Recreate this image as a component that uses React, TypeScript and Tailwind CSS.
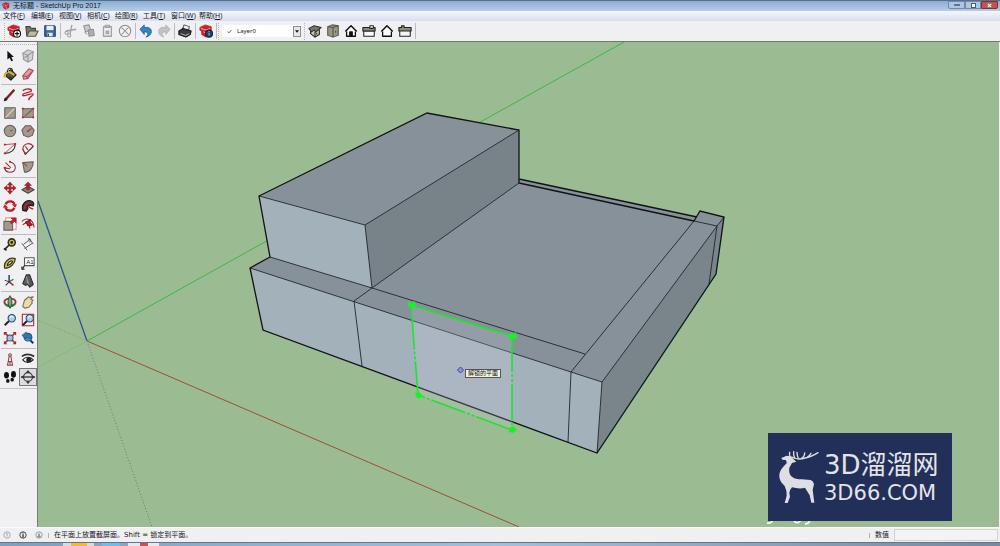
import React from 'react';

type Tool = { label: string; icon: React.ReactNode; active?: boolean };

const RED = '#b5222b';
const TAUPE = '#a39a8c';

const Icon: React.FC<{ children: React.ReactNode }> = ({ children }) => (
    <svg viewBox="0 0 16 16" className="size-[14px]" fill="none" stroke="#222" strokeWidth="1.2" strokeLinejoin="round">
        {children}
    </svg>
);

const Logo = () => (
    <>
        <path d="M1 4l6-3 7 2v8l-6 4-5-3V8L1 7z" fill="#cf202b" stroke="#9e1820" strokeWidth=".7" />
        <path d="M2 5l6 2 5-2M5 9l4 1.500V14" fill="none" stroke="#f6d5d5" strokeWidth=".9" />
    </>
);

const Magnifier = () => (
    <>
        <path d="M7 9L2 14" stroke="#222" strokeWidth="2.4" />
        <circle cx="10" cy="6" r="4.2" fill="#a9d0ea" stroke="#27506f" />
        <path d="M8 5q2-2 4 0" stroke="#fff" />
    </>
);

const House: React.FC<{ door?: boolean }> = ({ door }) => (
    <>
        <path d="M3 8v6h10V8" fill="#fff" stroke="#111" strokeWidth="1.5" />
        <path d="M1.500 8.500L8 2l6.500 6.500" fill="#fff" stroke="#111" strokeWidth="1.700" />
        {door && <path d="M6.500 14V9h3v5" fill="#111" stroke="#111" />}
    </>
);

const fileTools: Tool[] = [
    {
        label: '新建',
        icon: (
            <>
                <Logo />
                <circle cx="11.500" cy="11" r="4" fill="#fff" stroke="#111" />
                <path d="M11.500 8.500v5M9 11h5" stroke="#111" strokeWidth="1.400" />
            </>
        ),
    },
    {
        label: '打开',
        icon: (
            <>
                <path d="M1 3h5l1 2h5v8H2z" fill="#77776a" stroke="#444" />
                <path d="M2 14l3-6h10l-3 6z" fill="#bcbca4" stroke="#55554a" />
            </>
        ),
    },
    {
        label: '保存',
        icon: (
            <>
                <path d="M2 2h11l1 1v11H2z" fill="#3e6d9b" stroke="#1f3f63" />
                <path d="M4 2h8v5H4z" fill="#e8eff5" stroke="none" />
                <path d="M5 10h6v4H5z" fill="#dbe6ef" stroke="none" />
                <path d="M6 11v3" />
            </>
        ),
    },
];

const editTools: Tool[] = [
    {
        label: '剪切',
        icon: (
            <g stroke="#a2a2a5">
                <path d="M9 1L7 11M2 8l12-2" strokeWidth="1.500" />
                <circle cx="6" cy="13" r="1.800" />
                <circle cx="3" cy="10" r="1.800" />
            </g>
        ),
    },
    {
        label: '复制',
        icon: (
            <g stroke="#929295" fill="#c9c9cb">
                <path d="M2 2l6-1 2 6-6 2z" />
                <path d="M7 7l6-1 1 7-6 1z" fill="#aeaeb1" />
                <path d="M3 9l3 3" />
            </g>
        ),
    },
    {
        label: '粘贴',
        icon: (
            <g stroke="#a2a2a5">
                <path d="M4 3h9v11H4z" strokeWidth="1.500" />
                <path d="M6 1.500h5V4H6zM7 8h3v3H7z" fill="#b8b8ba" />
            </g>
        ),
    },
    {
        label: '删除',
        icon: (
            <g stroke="#8e8e91">
                <circle cx="8" cy="8" r="6.500" />
                <path d="M4 4l8 8M12 4l-8 8" />
            </g>
        ),
    },
];

const undoTools: Tool[] = [
    { label: '撤销', icon: <path d="M1 6l5-5v3c6-1 9 2 8 6-1 3-3 4-6 5 3-3 3-6-2-6v3z" fill="#2f86c4" stroke="#1b5685" strokeWidth=".8" /> },
    { label: '重做', icon: <path d="M15 6l-5-5v3C4 3 1 6 2 10c1 3 3 4 6 5-3-3-3-6 2-6v3z" fill="#c2c2c5" stroke="#aaaaad" strokeWidth=".8" /> },
];

const printTools: Tool[] = [
    {
        label: '打印',
        icon: (
            <>
                <path d="M5 6l2-5 6 2-1 4z" fill="#eee" stroke="#555" />
                <path d="M1 8l5-3 9 3-1 4-5 3-8-3z" fill="#3b3b3f" stroke="#151515" />
                <path d="M3 11l6 2 4-2" stroke="#bbb" />
            </>
        ),
    },
];

const infoTools: Tool[] = [
    {
        label: '模型信息',
        icon: (
            <>
                <Logo />
                <circle cx="11.500" cy="11" r="4" fill="#243f70" stroke="#142544" />
                <path d="M11.500 10v3M11.500 8v1" stroke="#a9b9d6" />
            </>
        ),
    },
];

const viewTools: Tool[] = [
    {
        label: '等轴',
        icon: (
            <>
                <path d="M3 7v4l5 4 5-3V6" fill="#c9c7b5" />
                <path d="M1 5l6-3 8 2-6 5-2-2-3 2z" fill="#77766a" stroke="#333" />
                <path d="M8 9v6M10 10v2" />
            </>
        ),
    },
    {
        label: '俯视图',
        icon: (
            <>
                <path d="M2 3l5-2 7 1v11l-6 2-6-2z" fill="#9a9884" stroke="#55544a" />
                <path d="M8 4v11M2 3l6 1 6-2M11 8v2" stroke="#55544a" />
            </>
        ),
    },
    { label: '前视图', icon: <House door /> },
    {
        label: '右视图',
        icon: (
            <>
                <path d="M2 8h12v6H2z" fill="#fff" />
                <path d="M1 4h14v4H1z" fill="#8c8a78" />
                <path d="M9 2h4v3H9z" fill="#fff" />
            </>
        ),
    },
    { label: '后视图', icon: <House /> },
    {
        label: '左视图',
        icon: (
            <>
                <path d="M2 7h12v7H2z" fill="#f4f4f0" />
                <path d="M1 4h3V2h3v2h8v4H1z" fill="#8c8a78" />
            </>
        ),
    },
];

const sideGroups: Tool[][] = [
    [
        { label: '选择', icon: <path d="M5 2v10l2.500-2 2 4 2-1-2-4h3z" fill="#111" stroke="none" /> },
        {
            label: '制作组件',
            icon: (
                <g stroke="#949497">
                    <path d="M2 5l6-4 6 2-1 9-5 3-5-3z" fill="#d2d2d4" />
                    <path d="M2 5l6 2 6-4M8 7v8M4 10l7-5" />
                </g>
            ),
        },
        {
            label: '材质',
            icon: (
                <>
                    <path d="M3 7l6-4 6 6-6 6-5-4z" fill="#55564a" stroke="#1d1d1a" />
                    <path d="M2 12c-1-4 2-7 6-6l5 3" stroke="#d3b62a" strokeWidth="2.400" />
                    <path d="M5 6c0-6 6-6 6 0M7 11l3 2" />
                </>
            ),
        },
        {
            label: '擦除',
            icon: (
                <>
                    <path d="M2 10l7-8 5 2-6 9-5 1z" fill="#eb98a5" stroke="#a54d5b" />
                    <path d="M2 10l5 1 7-7M7 11v3" stroke="#a54d5b" />
                </>
            ),
        },
    ],
    [
        {
            label: '直线',
            icon: (
                <>
                    <path d="M3 13L13 2" stroke="#7c1e20" strokeWidth="2.600" />
                    <path d="M1.500 14.500l1-3 2 2z" fill="#222" />
                </>
            ),
        },
        { label: '手绘线', icon: <path d="M2 3c4-3 10-2 10 0S2 5 2 8s11-3 12-1-6 3-5 7" stroke={RED} strokeWidth="1.500" /> },
        {
            label: '矩形',
            icon: (
                <>
                    <path d="M2 2h12v12H2z" fill={TAUPE} stroke="#665e53" />
                    <path d="M3 13L13 3" stroke="#ded8ce" />
                </>
            ),
        },
        {
            label: '旋转长方形',
            icon: (
                <>
                    <path d="M2 3h12v10H2z" fill={TAUPE} stroke="#8d6a62" />
                    <path d="M4 12l9-8" stroke="#77665d" />
                    <path d="M1 2h2v2H1zM13 2h2v2h-2zM1 12h2v2H1zM13 12h2v2h-2z" fill={RED} stroke="none" />
                </>
            ),
        },
        {
            label: '圆',
            icon: (
                <>
                    <circle cx="8" cy="8" r="6.500" fill={TAUPE} stroke="#665e53" />
                    <path d="M8 8l3-1" stroke="#8d4a44" />
                </>
            ),
        },
        {
            label: '多边形',
            icon: (
                <>
                    <path d="M5 2h6l4 5-2 6-5 2-5-2-2-6z" fill={TAUPE} stroke="#74564f" />
                    <path d="M8 8l4-3" stroke="#a0423f" />
                    <circle cx="8" cy="8" r="1" fill={RED} stroke="none" />
                </>
            ),
        },
        {
            label: '圆弧',
            icon: (
                <>
                    <path d="M2 13C9 13 14 9 14 2" stroke="#333" />
                    <path d="M2 3l12-1M2 13L14 2" stroke={RED} strokeWidth=".9" />
                    <path d="M1 12h2v2H1zM13 1h2v2h-2zM1 2h2v2H1z" fill={RED} stroke="none" />
                </>
            ),
        },
        {
            label: '两点圆弧',
            icon: (
                <>
                    <path d="M2 8C3 1 11 0 14 5L5 14z" stroke={RED} />
                    <path d="M2 8l3 6L14 5M5 5l3 4" stroke="#674046" />
                    <circle cx="5" cy="13" r="1.300" fill={RED} stroke="none" />
                </>
            ),
        },
        {
            label: '三点圆弧',
            icon: (
                <>
                    <path d="M8 2c9 3 7 12 0 12-3 0-5-1-6-4" stroke="#7d3238" />
                    <path d="M2 9l6 1M3 3l6 6" stroke={RED} />
                    <circle cx="2" cy="9" r="1.300" fill={RED} stroke="none" />
                    <circle cx="8" cy="2" r="1.200" fill={RED} stroke="none" />
                </>
            ),
        },
        {
            label: '扇形',
            icon: (
                <>
                    <path d="M2 3l12-1c0 7-4 12-10 12z" fill={TAUPE} stroke="#6d5c50" />
                    <path d="M2 3l5 4" stroke="#a0423f" />
                </>
            ),
        },
    ],
    [
        {
            label: '移动',
            icon: <path d="M8 1l3 3.500H9V7h2.500V5L15 8l-3.500 3V9H9v2.500h2L8 15l-3-3.500h2V9H4.500v2L1 8l3.500-3v2H7V4.500H5z" fill={RED} stroke="#84141b" strokeWidth=".5" />,
        },
        {
            label: '推拉',
            icon: (
                <>
                    <path d="M1 10l7-4 7 4-7 4z" fill="#8c8271" stroke="#4d473e" />
                    <path d="M8 1l4 4H9.500v5h-3V5H4z" fill={RED} stroke="#7b151b" strokeWidth=".6" />
                </>
            ),
        },
        {
            label: '旋转',
            icon: (
                <>
                    <path d="M3 6c2-5 9-4 10 0M13 10c-2 5-9 4-10 0" stroke="#c01c26" strokeWidth="2.600" />
                    <path d="M10 6h6l-2 4zM0 10h6L2 6z" fill="#c01c26" stroke="none" />
                </>
            ),
        },
        {
            label: '路径跟随',
            icon: (
                <>
                    <path d="M2 13C0 5 6 1 11 2c4 1 4 4 3 6l-4-1c-2 0-3 2-2 4l-2 3z" fill="#4d3835" stroke="#211615" />
                    <path d="M4 11C4 5 8 4 11 5M8 8c2 1 3 4 6 3" stroke="#b62832" strokeWidth="1.800" />
                </>
            ),
        },
        {
            label: '缩放',
            icon: (
                <>
                    <path d="M3 1h12v13H3z" fill="#fff" stroke="#d99a9c" />
                    <path d="M1 5h10v10H1z" fill={TAUPE} stroke="#6b6256" />
                    <path d="M9 1h6v6l-2-2-3 3-2-2 3-3z" fill="#c01c26" stroke="#c01c26" strokeWidth=".6" />
                </>
            ),
        },
        {
            label: '偏移',
            icon: (
                <>
                    <path d="M1 5C6 0 14 2 15 12M2 9c4-4 8-2 8 4" stroke={RED} strokeWidth="1.300" />
                    <path d="M5 6l6-3-1 3 3 3-5 1-1-2z" fill="#b5222b" stroke="#7b151b" />
                </>
            ),
        },
    ],
    [
        {
            label: '卷尺',
            icon: (
                <>
                    <circle cx="10" cy="5" r="4" fill="#c8bd48" stroke="#34321a" strokeWidth="1.800" />
                    <circle cx="10" cy="5" r="1" fill="#333" />
                    <path d="M7 8l-5 5M1 12l3 2" stroke="#222" strokeWidth="1.800" />
                </>
            ),
        },
        { label: '尺寸', icon: <path d="M3 7L10 2M8 1l3 1-1 3M1 6l6 8M9 0l5 7M4 12l9-6" stroke="#555" strokeWidth="1.100" /> },
        {
            label: '量角器',
            icon: (
                <>
                    <path d="M2 14C0 7 7 1 14 3c0 5-5 11-12 11z" fill="#c9c052" stroke="#393823" strokeWidth="1.400" />
                    <path d="M5 11c0-3 3-6 6-5-1 3-3 4-6 5z" fill="#f3f0d5" />
                </>
            ),
        },
        {
            label: '文字',
            icon: (
                <>
                    <path d="M4 2h11v9H4z" fill="#fff" stroke="#555" />
                    <path d="M2 14l2-3M1 12v3h3" stroke="#222" />
                    <text x="6" y="9.500" fontSize="7" fontFamily="Liberation Sans, sans-serif" fill="#222" stroke="none">
                        A1
                    </text>
                </>
            ),
        },
        {
            label: '轴',
            icon: (
                <>
                    <path d="M7 9V1" stroke="#244a75" strokeWidth="1.800" />
                    <path d="M7 9l5-3" stroke="#2f8a43" strokeWidth="1.600" />
                    <path d="M7 9l5 4" stroke={RED} strokeWidth="1.600" />
                    <path d="M2 7l5 2-4 4" stroke="#333" />
                </>
            ),
        },
        {
            label: '三维文字',
            icon: (
                <>
                    <path d="M2 11L6 1h4l4 11-4 3-2-3-3 1z" fill="#58595a" stroke="#2b2b2b" />
                    <path d="M6 3l3 9M7 7v3" stroke="#999" />
                </>
            ),
        },
    ],
    [
        {
            label: '环绕观察',
            icon: (
                <>
                    <ellipse cx="8" cy="8" rx="6.500" ry="4" stroke="#b5222b" strokeWidth="2" />
                    <path d="M2 9c2 5 10 5 12 0" stroke="#2b7a44" strokeWidth="2.200" />
                    <path d="M8 1c-3 3-3 11 0 14 3-3 3-11 0-14z" fill="#73aa7d" stroke="#2b5b39" />
                </>
            ),
        },
        {
            label: '平移',
            icon: <path d="M2 13l2-7 5-4 1 1 4-1-3 3 3 1-2 2 1 1-4 5-5 1z" fill="#ecd9a8" stroke="#7b7056" />,
        },
        { label: '缩放视图', icon: <Magnifier /> },
        {
            label: '缩放窗口',
            icon: (
                <>
                    <path d="M1.500 1.500h13v13h-13z" stroke={RED} />
                    <Magnifier />
                </>
            ),
        },
        {
            label: '充满视窗',
            icon: (
                <>
                    <path d="M2 2l12 12M14 2L2 14" stroke="#84323a" strokeWidth="1.800" />
                    <path d="M1 1h4L1 5zM15 1v4l-4-4zM1 15v-4l4 4zM15 15h-4l4-4z" fill={RED} stroke="none" />
                    <circle cx="8" cy="8" r="3.500" fill="#a5bfd3" stroke="#3d5468" />
                </>
            ),
        },
        {
            label: '上一个',
            icon: (
                <>
                    <path d="M9 9l5 5" stroke="#20384f" strokeWidth="2.400" />
                    <circle cx="8" cy="7" r="4.500" fill="#4f91c2" stroke="#245680" />
                    <path d="M1 5l5-4v2l6 2-1 4-5-2v2z" fill="#3379b1" stroke="#1c507b" strokeWidth=".7" />
                </>
            ),
        },
    ],
    [
        {
            label: '定位相机',
            icon: (
                <>
                    <circle cx="8" cy="3.500" r="1.500" stroke="#934049" />
                    <path d="M7 5L6 11h4L9 5M6 11l-1 4h6l-1-4M8 11v3" stroke="#934049" />
                </>
            ),
        },
        {
            label: '绕轴旋转',
            icon: (
                <>
                    <path d="M1 5c4-3 9-3 14 0" stroke="#333" strokeWidth="2" />
                    <path d="M2 9c3-4 9-4 12 0-4 4-9 4-12 0z" fill="#fff" stroke="#222" />
                    <circle cx="9" cy="9" r="2.400" fill="#222" />
                </>
            ),
        },
        {
            label: '漫游',
            icon: (
                <g fill="#111" stroke="none">
                    <ellipse cx="4" cy="6" rx="2.800" ry="3.800" />
                    <ellipse cx="5.500" cy="12.500" rx="2" ry="2.200" />
                    <ellipse cx="12" cy="5" rx="2.800" ry="3.800" />
                    <ellipse cx="10.500" cy="11" rx="2" ry="2.200" />
                </g>
            ),
        },
        {
            label: '剖切面',
            active: true,
            icon: (
                <>
                    <circle cx="8" cy="8" r="5" stroke="#333" />
                    <path d="M0 8h16" stroke="#333" strokeWidth="1.500" />
                    <path d="M8 0l2.500 3h-5zM8 16l2.500-3h-5zM0 8l3-2v4zM16 8l-3-2v4z" fill="#333" stroke="none" />
                </>
            ),
        },
    ],
];

const menus = [
    ['文件', 'F'],
    ['编辑', 'E'],
    ['视图', 'V'],
    ['相机', 'C'],
    ['绘图', 'R'],
    ['工具', 'T'],
    ['窗口', 'W'],
    ['帮助', 'H'],
];

const ToolButton: React.FC<{ tool: Tool }> = ({ tool }) => (
    <button
        aria-label={tool.label}
        className={
            tool.active
                ? 'flex size-[18px] items-center justify-center border border-[#77777a] bg-[#dcdcdf]'
                : 'flex size-[18px] items-center justify-center'
        }
    >
        <Icon>{tool.icon}</Icon>
    </button>
);

const ToolGroup: React.FC<{ tools: Tool[] }> = ({ tools }) => (
    <div className="flex">
        {tools.map((tool) => (
            <ToolButton key={tool.label} tool={tool} />
        ))}
    </div>
);

const Divider = () => <div className="mx-px h-[16px] w-px bg-[#bcbcc0]" />;
const Grip = () => <div className="h-[17px] border-l border-dotted border-[#b5b5b9]" />;

const Model = () => (
    <svg viewBox="38 42 961 485" preserveAspectRatio="xMinYMin slice" className="absolute inset-0 h-full w-full" fill="none">
        {/* axes */}
        <path d="M87 341L624 42" stroke="#3fb548" />
        <path d="M87 341l432 186" stroke="#a04d33" />
        <path d="M87 341L38 201" stroke="#2b5391" strokeWidth="1.300" />
        <path d="M87 341l65 186" stroke="#5d7d85" strokeDasharray="1 2" />
        <path d="M87 341l-49-21" stroke="#9a8c62" strokeDasharray="1 2" />
        <path d="M87 341l-49 26" stroke="#85b980" />

        {/* faces */}
        <path d="M519 179l178 38 3-6 24 6-7 9-115 156L250 268l20-11 102 31 147-105z" fill="#869199" />
        <path d="M250 268l352 114-5 71-334-123z" fill="#a3b1bb" />
        <path d="M602 382l115-156 7-9-8 57-119 179z" fill="#79848b" />
        <path d="M427 113l92 17-154 95-106-29z" fill="#869199" />
        <path d="M259 196l106 29 7 63-102-31z" fill="#a3b1bb" />
        <path d="M365 225l154-95v53L372 288z" fill="#778289" />

        {/* inner edges */}
        <g stroke="#23262b" strokeWidth=".9">
            <path d="M259 196l106 29 154-95M365 225l7 63M270 257l102 31 147-105M372 288l213 66M372 288l-18 13 8 65" />
            <path d="M250 268l321 104 31 10-5 71M571 372l-3 70M571 372L694 221l23 5M602 382l115-156 7-9M717 226l-8 58" />
        </g>

        {/* silhouette */}
        <path
            d="M519 183v-53l-92-17-168 83 11 61-20 11 13 62 334 123 119-179 8-57-24-6-6 10M519 179l178 38M519 183l175 38"
            stroke="#101216"
            strokeWidth="1.300"
        />

        {/* section plane */}
        <path d="M411 305l101 31v94l-94-35z" fill="#c8c8da" fillOpacity=".22" />
        <path d="M411 305l101 31" stroke="#18e72c" strokeWidth="1.800" />
        <path d="M512 336v94l-94-35-7-90" stroke="#18e72c" strokeWidth="1.600" strokeDasharray="36 2 3 2 3 2" />
        <path
            d="M408 301l3 2 4-2 1 5-4 3-4-3zM509 333l4 1 3-2 1 6-6 2-3-3zM415 393l4-1 4 4-5 3-2-3zM509 428l4-2 4 4-4 3-4-1z"
            fill="#18f02a"
        />
        <path d="M460.500 367l3 3-3 3-3-3z" fill="#8f95d2" stroke="#3c40a5" />

        <path d="M767 523q4 1 6-3M794 521q3 4 7-1M805 524q4 0 5-4" stroke="#fff" strokeWidth="1.500" />
    </svg>
);

const Watermark = () => (
    <div className="absolute right-[47px] bottom-[6px] flex h-[88px] w-[184px] items-center bg-[#222f59] text-[#e3e4e8]">
        <svg viewBox="44 66 135 178" className="ml-[8px] h-[60px] w-[45px] shrink-0" fill="none" stroke="#dedfe2" strokeLinecap="round">
            <path
                d="M60 98l16-7 12 2 12 12 5 4-13 4-8 14q-3 20 10 29 8 6 27 6l27 2q8 3 10 12l-4 18 5 38h-9l-5-22-14-23q-16 5-39-1-8 9-8 17l2 11-7 19h-9l6-22q1-15-6-29-13-11-15-22-4-13 5-28 9-12 16-18 0-7-3-10l-10-1z"
                fill="#dedfe2"
                stroke="none"
            />
            <path d="M86 94q-3-7-1-13M91 95q18 10 40 3 17-2 39-16M101 99q-6-10-4-20M112 101q-5-8-5-20M120 99q10-5 10-16M137 96q9-5 12-12" strokeWidth="4" />
        </svg>
        <div className="ml-[3px] font-['DejaVu_Sans','Noto_Sans_CJK_SC',sans-serif] whitespace-nowrap">
            <div className="text-[26px] leading-[32px]">3D溜溜网</div>
            <div className="text-[21px] leading-[24px]">3D66.COM</div>
        </div>
    </div>
);

const StatusIcon: React.FC<{ stroke: string; children: React.ReactNode }> = ({ stroke, children }) => (
    <svg viewBox="0 0 10 10" className="size-[8px]" fill="none" stroke={stroke}>
        <circle cx="5" cy="5" r="4" />
        {children}
    </svg>
);

const App: React.FC = () => {
    return (
        <div className="flex h-screen min-h-[546px] flex-col overflow-hidden bg-[#f0eff2] font-['Noto_Sans','Noto_Sans_CJK_SC',sans-serif] text-[7px] leading-[10px] text-[#16161a]">
            <header className="flex h-[11px] shrink-0 items-center justify-between border-t border-[#55718f] bg-linear-to-b from-[#8eacd0] to-[#b5cce8] pl-[2px]">
                <div className="flex items-center gap-[3px]">
                    <svg viewBox="0 0 16 16" className="size-[8px]">
                        <Logo />
                    </svg>
                    <h1 className="font-['Liberation_Sans','Noto_Sans_CJK_SC',sans-serif] text-[7px] leading-[10px]">
                        无标题 - SketchUp Pro 2017
                    </h1>
                </div>
                <div className="flex self-start pr-[2px]">
                    <button aria-label="最小化" className="flex h-[8px] w-[17px] items-center justify-center rounded-bl-xs border border-[#7189a7] bg-[#b0c6e0]">
                        <span className="h-[2px] w-[6px] border border-[#63758c] bg-white" />
                    </button>
                    <button aria-label="还原" className="flex h-[8px] w-[16px] items-center justify-center border border-[#7189a7] bg-[#b0c6e0]">
                        <span className="size-[5px] border border-[#4a5b70] bg-white" />
                    </button>
                    <button aria-label="关闭" className="flex h-[8px] w-[17px] items-center justify-center rounded-br-xs border border-[#7b3433] bg-[#c8504a]">
                        <svg viewBox="0 0 6 6" className="size-[5px]" stroke="#fff" strokeWidth="1.500">
                            <path d="M1 1l4 4M5 1L1 5" />
                        </svg>
                    </button>
                </div>
            </header>

            <nav className="flex h-[10px] shrink-0 items-center gap-[6px] bg-linear-to-b from-[#f5f7fc] to-[#d9def0] pl-[3px]">
                {menus.map(([name, key]) => (
                    <button key={name} className="w-[22px] text-left leading-[10px] whitespace-nowrap">
                        {name}(<span className="underline">{key}</span>)
                    </button>
                ))}
            </nav>

            <div className="flex h-[21px] shrink-0 items-center border-b border-[#6c7a6b] pl-[4px]">
                <Grip />
                <ToolGroup tools={fileTools} />
                <Divider />
                <ToolGroup tools={editTools} />
                <Divider />
                <ToolGroup tools={undoTools} />
                <Divider />
                <ToolGroup tools={printTools} />
                <Divider />
                <ToolGroup tools={infoTools} />
                <Divider />
                <Grip />
                <div className="relative mx-[3px] flex h-[12px] w-[79px] items-center bg-white">
                    <svg viewBox="0 0 8 8" className="ml-[5px] size-[5px]" fill="none" stroke="#222" strokeWidth="1.200">
                        <path d="M1 4l2 2 4-4" />
                    </svg>
                    <select aria-label="图层" className="h-[12px] flex-1 appearance-none bg-transparent pl-[5px] text-[6px] leading-[12px]">
                        <option>Layer0</option>
                    </select>
                    <span className="pointer-events-none absolute right-0 flex h-[11px] w-[8px] items-center justify-center border border-[#8e8e93] bg-[#e6e6ea]">
                        <svg viewBox="0 0 6 4" className="h-[3px] w-[4px]">
                            <path d="M0 0h6L3 4z" fill="#111" />
                        </svg>
                    </span>
                </div>
                <div className="mr-px">
                    <Grip />
                </div>
                <ToolGroup tools={viewTools} />
                <Divider />
            </div>

            <div className="flex min-h-0 flex-1">
                <aside className="w-[38px] shrink-0 border-r border-[#72806f] pt-[2px]">
                    <div className="border-t border-dotted border-[#b5b5b9]" />
                    <div className="flex flex-col border-b border-[#c4c4c8] pt-[2px]">
                        {sideGroups.map((group, i) => (
                            <div
                                key={i}
                                className="mx-[1px] mb-[1px] grid grid-cols-2 border-b border-[#bdbdc1] pb-[1px] last:border-b-0"
                            >
                                {group.map((tool) => (
                                    <ToolButton key={tool.label} tool={tool} />
                                ))}
                            </div>
                        ))}
                    </div>
                </aside>
                <main className="relative mr-[1px] flex-1 overflow-hidden bg-[#9bbc93]">
                    <Model />
                    <div
                        role="tooltip"
                        className="absolute top-[327px] left-[427px] h-[9px] border border-[#55554f] bg-[#f3f2e2] px-[2px] text-[6px] leading-[7px] whitespace-nowrap"
                    >
                        解锁的平面
                    </div>
                    <Watermark />
                </main>
            </div>

            <footer className="flex h-[15px] shrink-0 items-center border-t border-[#fafafc] pl-[3px]">
                <div className="flex items-center gap-[8px]">
                    <StatusIcon stroke="#9a9a9e">
                        <path d="M5 7V3M4 4l1-1 1 1" />
                    </StatusIcon>
                    <StatusIcon stroke="#222">
                        <path d="M5 8V4M5 2v1" strokeWidth="1.500" />
                    </StatusIcon>
                    <StatusIcon stroke="#8c8c90">
                        <path d="M3 7h4M5 3v3" strokeWidth="2" />
                    </StatusIcon>
                </div>
                <span className="ml-[5px] h-[5px] w-px bg-[#b3b3b7]" />
                <p className="ml-[5px] font-['DejaVu_Sans','Noto_Sans_CJK_SC',sans-serif]">在平面上放置截屏面。Shift = 锁定到平面。</p>
                <label htmlFor="measure" className="ml-auto flex items-center">
                    <span className="mr-[5px] h-[5px] w-px bg-[#b3b3b7]" />
                    数值
                </label>
                <input id="measure" className="mr-[2px] ml-[5px] h-[12px] w-[104px] border border-[#d2d2d6] bg-[#f3f2f5] px-1" />
            </footer>

            <div className="flex h-[4px] shrink-0 gap-[3px] border-t border-[#64758a] bg-linear-to-r from-[#7f9fbd] via-[#a5bfda] to-[#78899f] pl-[63px]">
                <span className="flex w-[31px] justify-center bg-[#d5dde3]">
                    <span className="w-[16px] bg-[#eebd2b]" />
                </span>
                <span className="flex w-[28px] justify-center">
                    <span className="w-[18px] bg-[#6fbde8]" />
                </span>
                <span className="flex w-[31px] justify-center bg-[#e6e9ed]">
                    <span className="w-[8px] bg-[#c5525a]" />
                </span>
            </div>
        </div>
    );
};

export default App;
